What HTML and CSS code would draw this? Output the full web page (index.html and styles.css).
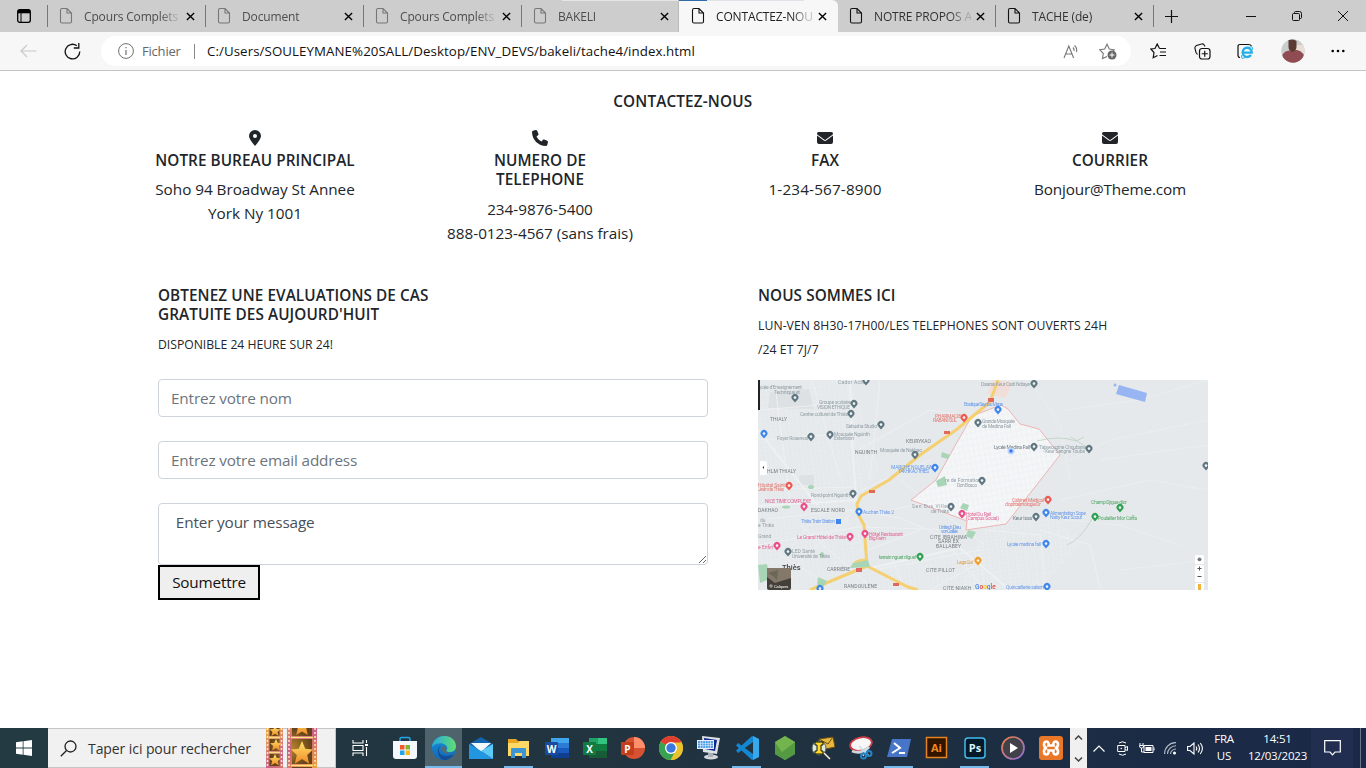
FILE: index.html
```html
<!DOCTYPE html>
<html lang="fr">
<head>
<meta charset="utf-8">
<title>CONTACTEZ-NOUS</title>
<link rel="stylesheet" href="styles.css">
</head>
<body>
<svg width="0" height="0" class="defs">
  <defs>
    <symbol id="doc" viewBox="0 0 14 18"><path d="M1.5 3.2Q1.5 1.5 3 1.5H8L12.5 6V14.5Q12.5 16 11 16H3Q1.5 16 1.5 14.5ZM8 1.7V6H12.3" fill="none" stroke="currentColor" stroke-width="1.1"/></symbol>
    <symbol id="x" viewBox="0 0 10 10"><path d="M1 1L9 9M9 1L1 9" stroke="currentColor" stroke-width="1.5"/></symbol>
    <symbol id="mail" viewBox="0 0 16 12"><path d="M1.5 0H14.500Q16 0 16 1.500 16 2.300 15.400 2.700L8.600 7.800Q8 8.200 7.400 7.800L.6 2.700Q0 2.300 0 1.500 0 0 1.500 0ZM0 3.500L6.800 8.600Q8 9.400 9.200 8.600L16 3.500V10Q16 12 14 12H2Q0 12 0 10Z" fill="currentColor"/></symbol>
    <linearGradient id="edgeA" x1="0" y1="0" x2="1" y2="0"><stop offset="0" stop-color="#25a8e0"/><stop offset="1" stop-color="#62dc72"/></linearGradient>
    <linearGradient id="edgeB" x1="0" y1="0" x2="0" y2="1"><stop offset="0" stop-color="#1b91d8"/><stop offset="1" stop-color="#1167b8"/></linearGradient>
    <linearGradient id="gold" x1="0" y1="0" x2="0" y2="1"><stop offset="0" stop-color="#ffe36a"/><stop offset="1" stop-color="#ef8a28"/></linearGradient>
    <linearGradient id="film" x1="0" y1="0" x2="1" y2="1"><stop offset="0" stop-color="#efb04c"/><stop offset=".5" stop-color="#c9608a"/><stop offset="1" stop-color="#f0a038"/></linearGradient>
    <radialGradient id="frame"><stop offset="0" stop-color="#b8862c"/><stop offset="1" stop-color="#65421b"/></radialGradient>
    <linearGradient id="ring" x1="0" y1="0" x2="1" y2="1"><stop offset="0" stop-color="#f08040"/><stop offset="1" stop-color="#8a70e0"/></linearGradient>
    <pattern id="streets" width="9" height="8" patternUnits="userSpaceOnUse" patternTransform="rotate(-8)"><path d="M0 1H9M2 0V8M0 5.500H5M6.500 1V8" fill="none" stroke="#eff2f4" stroke-width=".6"/></pattern>
    <pattern id="quarter" width="5" height="6" patternUnits="userSpaceOnUse" patternTransform="rotate(-10)"><path d="M0 1H5M1 0V6" fill="none" stroke="#e9edef" stroke-width=".6"/></pattern>
    <g id="pin"><path d="M0 3.600L-2.200 1A3.400 3.400 0 1 1 2.200 1Z"/><circle cy="-1.400" r="1.300" fill="#f2f5f7"/></g>
    <path id="star" d="M0-10L3-3.500 10-3 4.700 1.700 6.500 9 0 5-6.500 9-4.700 1.700-10-3-3-3.500Z"/>
  </defs>
</svg>

<header class="tabs">
  <div class="tab-menu"><svg width="14" height="14" viewBox="0 0 14 14"><rect x=".7" y=".7" width="12.600" height="12.600" rx="2" fill="none" stroke="#000" stroke-width="1.300"/><path d="M1 1H13V4.300H1Z"/><path d="M4 4V13" stroke="#000"/></svg></div>
  <div class="tab dim"><svg class="doc"><use href="#doc"/></svg><span class="tab-name">Cpours Complets</span><svg class="close"><use href="#x"/></svg></div>
  <div class="tab dim"><svg class="doc"><use href="#doc"/></svg><span class="tab-name">Document</span><svg class="close"><use href="#x"/></svg></div>
  <div class="tab dim"><svg class="doc"><use href="#doc"/></svg><span class="tab-name">Cpours Complets</span><svg class="close"><use href="#x"/></svg></div>
  <div class="tab dim loading"><svg class="doc"><use href="#doc"/></svg><span class="tab-name">BAKELI</span><svg class="close"><use href="#x"/></svg></div>
  <div class="tab active"><svg class="doc"><use href="#doc"/></svg><span class="tab-name">CONTACTEZ-NOU</span><svg class="close"><use href="#x"/></svg></div>
  <div class="tab after"><svg class="doc"><use href="#doc"/></svg><span class="tab-name">NOTRE PROPOS A</span><svg class="close"><use href="#x"/></svg></div>
  <div class="tab"><svg class="doc"><use href="#doc"/></svg><span class="tab-name">TACHE (de)</span><svg class="close"><use href="#x"/></svg></div>
  <div class="new-tab"><svg width="15" height="15" viewBox="0 0 15 15"><path d="M7.500 1V14M1 7.500H14" stroke="#111" stroke-width="1.200"/></svg></div>
  <div class="win-buttons">
    <svg width="10" height="10"><path d="M0 5.500H10" stroke="#111"/></svg>
    <svg width="10" height="10" viewBox="0 0 10 10"><path d="M2.500 2V1.500Q2.500.5 3.500.5H7.500Q9.500.5 9.500 2.500V6.500Q9.500 7.500 8.500 7.500H8" fill="none" stroke="#111"/><rect x=".5" y="2.500" width="7" height="7" rx="1" fill="none" stroke="#111"/></svg>
    <svg width="10" height="10"><path d="M0 0L10 10M10 0L0 10" stroke="#111"/></svg>
  </div>
</header>

<nav class="toolbar">
  <svg class="back" width="17" height="14" viewBox="0 0 17 14"><path d="M16.500 7H1M7 1L1 7L7 13" fill="none" stroke="#c9c9c9" stroke-width="1.200"/></svg>
  <svg class="reload" width="17" height="17" viewBox="0 0 17 17"><path d="M15.800 8.500A7.300 7.300 0 1 1 12.800 2.700M14.800 0V5H9.800" fill="none" stroke="#111" stroke-width="1.300"/></svg>
  <div class="address">
    <svg width="16" height="16" viewBox="0 0 16 16"><circle cx="8" cy="8" r="7.400" fill="none" stroke="#707070"/><path d="M8 7V12M8 4V5.300" stroke="#707070" stroke-width="1.200"/></svg>
    <span class="scheme">Fichier</span>
    <span class="url">C:/Users/SOULEYMANE%20SALL/Desktop/ENV_DEVS/bakeli/tache4/index.html</span>
    <svg class="read" width="17" height="15" viewBox="0 0 17 15"><path d="M1 14L5.800 2L10.600 14M2.700 10H9M10 3.500Q11.500 5 11 7M11.500 1.500Q14.500 4 13.500 8" fill="none" stroke="#777" stroke-width="1.100"/></svg>
    <svg width="18" height="17" viewBox="0 0 18 17"><path d="M8 13.500L3.500 15.500 4.300 10.500 .8 6.800 5.700 6 8 1.200 10.300 6 15.200 6.800 14 8" fill="none" stroke="#777" stroke-width="1.100"/><circle cx="13" cy="12" r="4.500" fill="#666"/><path d="M13 9.500V14.500M10.500 12H15.500" stroke="#fff"/></svg>
  </div>
  <div class="tools">
    <svg width="17" height="16" viewBox="0 0 17 16"><path d="M9.500 5.500L7.200 1 5 5.500.8 6 4 9.500 3.200 14.700 7.500 12.500M9.500 5.500H16M10 9H16M9.500 12.500H16" fill="none" stroke="#111" stroke-width="1.200"/></svg>
    <svg width="17" height="17" viewBox="0 0 17 17"><path d="M3.500 11.500L2 9.500 1 5.500Q.5 3.500 2.500 2.500L7.500 1Q9.500.3 10.500 2.500L11 3.500" fill="none" stroke="#111" stroke-width="1.100"/><rect x="5.500" y="5.500" width="10.500" height="10.500" rx="2.500" fill="#f7f7f7" stroke="#111" stroke-width="1.200"/><path d="M10.750 7.700V13.800M7.700 10.750H13.800" stroke="#111" stroke-width="1.200"/></svg>
    <svg width="17" height="17" viewBox="0 0 17 17"><path d="M3 14.500Q1 14.500 1 12V3.500Q1 1.500 3 1.500H11.500Q13.500 1.500 14.500 3" fill="none" stroke="#111" stroke-width="1.200"/><path d="M14 12A4.600 4.600 0 1 1 14.800 9.700H6" fill="none" stroke="#25aee8" stroke-width="2.300"/><path d="M5 12Q3 17.500 9 14M11 5Q16.500 2 15.500 6.500" fill="none" stroke="#25aee8"/></svg>
    <svg width="24" height="24" viewBox="0 0 24 24"><clipPath id="face"><circle cx="12" cy="12" r="11.700"/></clipPath><g clip-path="url(#face)"><path fill="#c9cdcb" d="M0 0H24V24H0Z"/><path fill="#e9ded5" d="M13 6H24V14H13Z"/><path fill="#8f4c53" d="M0 24Q0 12 8 11.500L16 11Q24 12 24 24Z"/><path fill="#5a3a33" d="M7.500 1Q12-1 15.500 2V8Q15.500 11 12 13 7.500 12 7.500 8Z"/></g></svg>
    <svg width="14" height="4"><circle cx="1.700" cy="2" r="1.300"/><circle cx="7" cy="2" r="1.300"/><circle cx="12.300" cy="2" r="1.300"/></svg>
  </div>
</nav>

<main class="page">
  <h6 class="title">CONTACTEZ-NOUS</h6>
  <section class="contacts">
    <div class="contact">
      <div class="contact-icon"><svg width="12" height="16" viewBox="0 0 12 16"><path fill="currentColor" fill-rule="evenodd" d="M6 16Q0 9 0 6A6 6 0 0 1 12 6Q12 9 6 16ZM6 4A2 2 0 1 0 6 8 2 2 0 0 0 6 4Z"/></svg></div>
      <h6>NOTRE BUREAU PRINCIPAL</h6>
      <p>Soho 94 Broadway St Annee<br>York Ny 1001</p>
    </div>
    <div class="contact">
      <div class="contact-icon"><svg width="16" height="16" viewBox="0 0 512 512"><path fill="currentColor" d="M164.900 24.600c-7.700-18.600-28-28.500-47.400-23.200l-88 24C12.100 30.200 0 46 0 64c0 247.400 200.600 448 448 448 18 0 33.800-12.100 38.600-29.500l24-88c5.300-19.400-4.600-39.700-23.200-47.400l-96-40c-16.300-6.800-35.200-2.100-46.300 11.600L304.700 368C234.300 334.700 177.300 277.700 144 207.300L193.300 167c13.700-11.200 18.400-30 11.600-46.300z"/></svg></div>
      <h6>NUMERO DE<br>TELEPHONE</h6>
      <p>234-9876-5400<br>888-0123-4567 (sans frais)</p>
    </div>
    <div class="contact">
      <div class="contact-icon"><svg width="16" height="12"><use href="#mail"/></svg></div>
      <h6>FAX</h6>
      <p class="fax">1-234-567-8900</p>
    </div>
    <div class="contact">
      <div class="contact-icon"><svg width="16" height="12"><use href="#mail"/></svg></div>
      <h6>COURRIER</h6>
      <p class="email">Bonjour@Theme.com</p>
    </div>
  </section>

  <section class="lower">
    <form class="form">
      <h6>OBTENEZ UNE EVALUATIONS DE CAS<br>GRATUITE DES AUJOURD'HUIT</h6>
      <p class="small">DISPONIBLE 24 HEURE SUR 24!</p>
      <input class="field" type="text" placeholder="Entrez votre nom">
      <input class="field" type="text" placeholder="Entrez votre email address">
      <textarea class="field area"> Enter your message</textarea>
      <button class="submit" type="button">Soumettre</button>
    </form>
    <div class="place">
      <h6>NOUS SOMMES ICI</h6>
      <p class="small hours">LUN-VEN 8H30-17H00/LES TELEPHONES SONT OUVERTS 24H<br>/24 ET 7J/7</p>
      <svg class="map" viewBox="758 380 450 210">
        <rect x="758" y="380" width="450" height="210" fill="#e5e9eb"/>
        <path d="M758 380H852L880 470 856 500 866 568 985 545V590H758Z" fill="url(#streets)" opacity=".55"/>
        <path d="M985 525L1050 510 1080 545 1040 590H960Z" fill="url(#streets)" opacity=".6"/>
        <path d="M770 392L809 389 814 409 768 408Z" fill="#dde1e4"/><path d="M800 475H814V485H798Z" fill="#dce1e4"/>
        <path d="M993 380L1012 382 1006 398 987 394Z" fill="#f2ded9"/>
        <g fill="none" stroke="#eef1f2" stroke-width=".9">
          <path d="M758 410L860 402M758 440L858 433M758 520L850 510 900 518 940 535 985 590M758 545L858 527 960 530M770 590L850 515M800 525L875 590M780 555L830 585M758 490L852 487M812 380L840 478M775 385L790 500M880 380L870 480M858 450L930 410 990 420M862 490L930 460M900 480L985 545M865 515L940 500M868 550L920 530M875 570L980 550M930 590L985 560M905 590L890 555M985 530L1040 535 1045 590M1040 530L1090 545 1100 588"/>
          <path stroke-width=".6" d="M1060 500L1150 480 1208 490M1060 465L1110 440 1208 420M1065 410L1140 400 1208 380M1030 380L1060 425 1070 480M1045 518L1120 525 1180 545M1100 460L1208 445M1120 570L1208 560"/>
          <path stroke-width="2" d="M850 380L852 440 856 500M758 506L858 500M758 430L817 505M870 568L960 548 1010 590"/>
        </g>
        <path d="M1001 405L1008 409 1020 424 1039 429 1060 455 1006 524 966 530 967 521 911 500 936 480 956 444 972 416Z" fill="#f5f6f8"/>
        <path d="M1001 405L1008 409 1020 424 1039 429 1060 455 1006 524 966 530 967 521 911 500 936 480 956 444 972 416Z" fill="url(#quarter)" stroke="#eca5a5" stroke-width=".8"/>
        <path d="M998 380L990 402 956 430 920 455 889 480 861 496 857 504 858 514 864 525 867 566M867 566L831 581 810 590M867 566L908 587 918 590M853 566Q855 560 866 560" fill="none" stroke="#f5cf70" stroke-width="3"/>
        <path d="M1037 441Q1060 435 1076 441L1084 437M1092 519Q1080 540 1067 545M1071 437L1088 448" fill="none" stroke="#b5cfbb" stroke-width=".7"/>
        <g fill="#a8d5b5"><path d="M936 481L945 476 947 485 938 487ZM942 452L950 455 948 459 941 457ZM963 503L969 505 967 511 960 508ZM968 530L976 532 972 539 966 536ZM853 563L868 560 870 567 850 568ZM818 577L827 581 822 589 817 587ZM758 565L767 564 770 579 760 583Z"/><ellipse cx="786" cy="507" rx="4" ry="1.500"/><ellipse cx="811" cy="487" rx="3" ry="2"/><ellipse cx="822" cy="555" rx="2" ry="3"/></g>
        <path d="M1119 385L1147 393 1145 402 1116 394Z" fill="#96b5f2"/><circle cx="1115" cy="385" r="1.500" fill="#96b5f2"/>
        <g fill="#e0685e"><rect x="944" y="431" width="6" height="3"/><rect x="869" y="490" width="6" height="3"/><rect x="856" y="568" width="6" height="4"/><rect x="893" y="583" width="6" height="3"/><rect x="988" y="398" width="6" height="4"/></g>
        <g class="map-text gray">
          <text x="758" y="389" textLength="44">lycée d'Enseignement</text><text x="774" y="394" textLength="26">Technique et</text><text x="838" y="384" textLength="27">Cador Actu</text>
          <text x="819" y="404" textLength="32">Groupe scolaire</text><text x="817" y="409" textLength="33">VISION ETHIQUE</text><text x="800" y="416" textLength="48">Centre culturel de Thiès</text>
          <text x="846" y="428" textLength="31">Sabusha Studio</text><text x="777" y="440" textLength="31">Foyer Rosenval</text><text x="834" y="436" textLength="36">Mosquée Nguinth</text><text x="834" y="440" textLength="20">Extension</text>
          <text x="880" y="452" textLength="42">Mosquée de Nakhao</text><text x="811" y="497" textLength="39">Rond-point Nguinth</text><text x="945" y="482" textLength="36">re de Formation</text><text x="957" y="487" textLength="20">Don Bosco</text>
          <text x="912" y="508" textLength="35">Sen Bus Ville</text><text x="931" y="513" textLength="18">de Thiès</text><text x="792" y="553" textLength="23">LED Santé</text><text x="792" y="558" textLength="38">Université de Thiès</text>
          <text x="981" y="386" textLength="49">Daaras Keur Cadi Ndiaye</text><text x="982" y="423" textLength="33">Grande Mosquée</text><text x="982" y="428" textLength="29">de Medina Fall</text><text class="ink" x="994" y="449" textLength="36">Lycée Medina Fall</text>
          <text x="1039" y="449" textLength="47">Tajawouzine Choubane</text><text x="1043" y="453" textLength="42">- Keur Sengne Touba</text><text class="ink" x="1013" y="520" textLength="19">Keur Issa</text>
          <text x="760" y="522">du</text><text x="758" y="527">e Thiès</text><text x="758" y="538">Grand</text>
        </g>
        <g class="map-text area-name">
          <text x="770" y="421" textLength="17">THIALY</text><text x="855" y="454" textLength="22">NGUINTH</text><text x="906" y="443" textLength="25">KEURYKAO</text><text x="767" y="473" textLength="29">HLM THIALY</text><text x="758" y="512" textLength="20">DAKHAO</text><text x="811" y="512" textLength="34">ESCALE NORD</text>
          <text x="930" y="539" textLength="37">CITE IBRAHIMA</text><text x="938" y="543" textLength="21">SARR EX</text><text x="936" y="547.500" textLength="25">BALLABEY</text><text x="926" y="571.500" textLength="29">CITE PILLOT</text><text x="943" y="589.500" textLength="28">CITE NIAKH</text><text x="827" y="571" textLength="23">CARRIÈRE</text><text x="844" y="588" textLength="33">RANDOULÈNE</text>
        </g>
        <g class="map-text blue"><text x="964" y="406" textLength="39">Boutique Seydou Mane</text><text x="891" y="469" textLength="42">MARCHE NGUELAW</text><text x="898" y="473" textLength="31">TAKHIKAO THIES</text><text x="863" y="514" textLength="31">Auchan Thiès 2</text><text x="801" y="523" textLength="34">Thiès Train Station</text><text x="939" y="529" textLength="22">Unitech Dieu</text><text x="941" y="533" textLength="17">von Galilée</text><text x="1050" y="515" textLength="36">Alimentation Sope</text><text x="1050" y="519" textLength="32">Naby Keur Scout</text><text x="1007" y="546" textLength="34">Lycée medina fall</text><text x="1006" y="589" textLength="38">Quincaillerie salam</text></g>
        <g class="map-text red"><text x="935" y="418" textLength="26">PHARMACIE</text><text x="933" y="422" textLength="24">RABANI SUL</text><text x="758" y="487" textLength="27">Hôpital Saint</text><text x="758" y="491" textLength="26">Jean de Thiès</text><text x="1012" y="502" textLength="32">Cabinet Médical</text><text x="1005" y="506" textLength="36">d'ophtalmologie Dr</text></g>
        <g class="map-text pink"><text x="765" y="503" textLength="46">NICE TIME COMPLEXE</text><text x="797" y="539" textLength="49">Le Grand Hôtel de Thiès</text><text x="869" y="536" textLength="34">Hôtel Restaurant</text><text x="869" y="540" textLength="17">Big Faim</text><text x="758" y="549">e Enfin</text><text x="966" y="516" textLength="25">Hotel Du Rail</text><text x="966" y="520" textLength="33">(Campus Social)</text></g>
        <g class="map-text green"><text x="879" y="559" textLength="37">terrain nguet diguel</text><text x="1091" y="504" textLength="36">Champ Djigue dior</text><text x="1098" y="520" textLength="39">Poulailler Mor Caffa</text></g>
        <text class="map-text orange" x="957" y="564" textLength="16">Legs Gui</text>
        <text class="thies" x="782" y="570">Thiès</text>
        <g fill="#607782"><use href="#pin" x="795" y="399"/><use href="#pin" x="866" y="382"/><use href="#pin" x="854" y="405"/><use href="#pin" x="851" y="415"/><use href="#pin" x="881" y="426"/><use href="#pin" x="811" y="438"/><use href="#pin" x="830" y="436"/><use href="#pin" x="915" y="456"/><use href="#pin" x="853" y="495"/><use href="#pin" x="951" y="508"/><use href="#pin" x="788" y="553"/><use href="#pin" x="978" y="424"/><use href="#pin" x="982" y="482"/><use href="#pin" x="1034" y="385"/><use href="#pin" x="1034" y="448"/><use href="#pin" x="1089" y="450"/><use href="#pin" x="1036" y="518"/><use href="#pin" x="1206" y="467"/></g>
        <g fill="#3f86ec"><use href="#pin" x="764" y="435"/><use href="#pin" x="935" y="469"/><use href="#pin" x="859" y="513"/><use href="#pin" x="998" y="411"/><use href="#pin" x="1046" y="514"/><use href="#pin" x="1046" y="545"/><use href="#pin" x="1047" y="588"/><use href="#pin" x="820" y="590"/><rect x="836" y="519" width="5" height="5"/></g>
        <g fill="#ec5951"><use href="#pin" x="964" y="419"/><use href="#pin" x="789" y="487"/><use href="#pin" x="1048" y="501"/></g>
        <g fill="#eb4d88"><use href="#pin" x="804" y="508"/><use href="#pin" x="850" y="538"/><use href="#pin" x="865" y="535"/><use href="#pin" x="777" y="547"/><use href="#pin" x="962" y="515"/></g>
        <g fill="#2da151"><use href="#pin" x="920" y="558"/><use href="#pin" x="1095" y="518"/><use href="#pin" x="1120" y="509"/></g>
        <use href="#pin" x="978" y="562" fill="#f39c25"/>
        <circle cx="1011" cy="451" r="3.500" fill="#bdd2fc"/><circle cx="1011" cy="451" r="1.700" fill="#3478ef"/>
        <text class="google" x="975" y="589"><tspan fill="#4285f4">G</tspan><tspan fill="#ea4335">o</tspan><tspan fill="#fbbc05">o</tspan><tspan fill="#4285f4">g</tspan><tspan fill="#34a853">l</tspan><tspan fill="#ea4335">e</tspan></text>
        <path d="M758 380H760V410H758Z" fill="#222"/><path d="M760 461H765Q767 461 767 463V473Q767 475 765 475H760Z" fill="#fff"/><path d="M764 466V469L762.500 467.500Z" fill="#333"/>
        <rect x="767" y="568" width="24" height="22" rx="2" fill="#444039"/><path d="M767 568H791V578L775 583 767 577Z" fill="#83786a"/><path d="M768 573L778 570 777 580 773 576Z" fill="#6a6756"/><text x="774" y="588" class="map-text white">Calques</text><circle cx="771" cy="586" r="1.200" fill="none" stroke="#fff" stroke-width=".6"/>
        <g fill="#fff"><rect x="1195" y="555" width="9" height="9" rx="1.500"/><rect x="1195" y="565" width="9" height="17" rx="1.500"/><rect x="1195" y="583" width="9" height="7" rx="1.500"/></g><circle cx="1199.500" cy="559.300" r="1.900" fill="#777"/><path d="M1199.500 566.500V570.500M1197.500 568.500H1201.500M1197.500 576.500H1201.500" stroke="#555"/><path d="M1198 584H1201V590H1198Z" fill="#efb43a"/>
      </svg>
    </div>
  </section>
</main>

<footer class="taskbar">
  <div class="start"><svg width="16" height="16" viewBox="0 0 16 16" fill="#fff"><path d="M0 2.300L6.700 1.300V7.600H0ZM7.500 1.200L16 0V7.600H7.500ZM0 8.400H6.700V14.700L0 13.700ZM7.500 8.400H16V16L7.500 14.800Z"/></svg></div>
  <div class="search">
    <svg width="17" height="17" viewBox="0 0 17 17"><circle cx="10.500" cy="6.500" r="5.500" fill="none" stroke="#222" stroke-width="1.300"/><path d="M6.500 10.500L.8 16.200" stroke="#222" stroke-width="1.300"/></svg>
    <span>Taper ici pour rechercher</span>
    <svg class="films" width="52" height="40" viewBox="0 0 52 40">
      <path fill="url(#film)" d="M0 0H17V40H0ZM21 0H51V40H21Z"/>
      <path stroke="#ffe9c0" stroke-width="1.500" stroke-dasharray="2 2" d="M1.500 0V40M15.500 0V40M23 0V40M49 0V40"/>
      <path fill="url(#frame)" d="M3.500 0H13.500V8H3.500ZM3.500 11H13.500V23H3.500ZM3.500 26H13.500V38H3.500ZM26 0H46V8H26ZM26 11H46V36H26ZM26 39H46V40H26Z"/>
      <path d="M3 9.500H14M3 24.500H14M25 9.500H47M25 37.500H47" stroke="#ffdf7a" stroke-width="1.500"/>
      <g fill="url(#gold)"><use href="#star" transform="translate(9 3) scale(.55)"/><use href="#star" transform="translate(10 17) scale(.6)"/><use href="#star" transform="translate(9 32) scale(.6)"/><use href="#star" transform="translate(36 25) scale(1.100 1.200)"/><use href="#star" transform="translate(36 -1) scale(.9)"/></g>
    </svg>
  </div>
  <div class="taskview"><svg width="17" height="16" viewBox="0 0 17 16"><path d="M1 0V3H11V0M1 16V13H11V16M1 5.500H11V10.500H1ZM14.500 0V3M14.500 7V16" fill="none" stroke="#fff" stroke-width="1.100"/><rect x="13" y="4" width="3" height="2" fill="#fff"/></svg></div>
  <div class="apps">
    <div class="app"><svg viewBox="0 0 24 24"><path d="M7 7V3Q7 1.500 8.500 1.500H15.500Q17 1.500 17 3V7" fill="none" stroke="#24a7e8" stroke-width="1.500"/><path d="M0 5H24V20Q24 23 21 23H3Q0 23 0 20Z" fill="#f4f7fb"/><path fill="#f15a2c" d="M7 9H11.500V13.500H7Z"/><path fill="#7fba2c" d="M12.500 9H17V13.500H12.500Z"/><path fill="#20a5e8" d="M7 14.500H11.500V19H7Z"/><path fill="#fdb813" d="M12.500 14.500H17V19H12.500Z"/></svg></div>
    <div class="app on current"><svg viewBox="0 0 24 24"><circle cx="12" cy="12" r="12" fill="url(#edgeB)"/><path d="M0 11C1-3 23-4 24 10C24 17 16 17 14 15C19 10 8 3 0 11Z" fill="url(#edgeA)"/><path d="M9 9C3 16 10 24 22 18C19 23 15 24 12 24C5 22 4 12 9 9Z" fill="#124f98"/><path d="M10 11Q8 19 22 18Q17 19 14 15 15 12 12 10Z" fill="#596a72"/></svg></div>
    <div class="app"><svg viewBox="0 0 24 24"><path fill="#1264ad" d="M0 8L12 1 24 8V14H0Z"/><path fill="#f3f8fc" d="M2 7H22L12 16Z"/><path fill="#2296e0" d="M0 8V23H24L12 15Z"/><path fill="#5cc9f7" d="M24 8V23L12 15Z"/></svg></div>
    <div class="app on"><svg viewBox="0 0 24 24"><path fill="#e8a622" d="M1 3H9L11 5H22V9H1Z"/><path fill="#ffd866" d="M1 7H11L13 5H22V20H1Z"/><path fill="#3e95d6" d="M4 13Q4 12 5 12H18Q19 12 19 13V22H15V17H8V22H4Z"/></svg></div>
    <div class="app"><svg viewBox="0 0 24 24"><path fill="#41a5ee" d="M6 2H24V7H6Z"/><path fill="#2b7cd3" d="M6 7H24V12H6Z"/><path fill="#185abd" d="M6 12H24V17H6Z"/><path fill="#103f91" d="M6 17H24V22H6Z"/><rect y="6" width="13" height="13" rx="1" fill="#174ca3"/><text class="logo" x="6.500" y="16.500">W</text></svg></div>
    <div class="app"><svg viewBox="0 0 24 24"><path fill="#21a366" d="M6 2H24V8H6Z"/><path fill="#107c41" d="M6 8H24V15H6Z"/><path fill="#185c37" d="M6 15H24V22H6Z"/><path fill="#33c481" d="M15 2H24V8H15Z"/><rect y="6" width="13" height="13" rx="1" fill="#107c41"/><text class="logo" x="6.500" y="16.500">X</text></svg></div>
    <div class="app"><svg viewBox="0 0 24 24"><circle cx="13" cy="12" r="11" fill="#d75232"/><path fill="#ff8f6b" d="M13 1A11 11 0 0 1 24 12H13Z"/><rect y="6" width="13" height="13" rx="1" fill="#c43e1c"/><text class="logo" x="6.500" y="16.500">P</text></svg></div>
    <div class="app"><svg viewBox="0 0 24 24"><circle cx="12" cy="12" r="12" fill="#eac22d"/><path fill="#df3e30" d="M12 12L1.600 6A12 12 0 0 1 22.400 6Z"/><path fill="#37a350" d="M12 12L1.600 6A12 12 0 0 0 12 24L17 14Z"/><path fill="#eac22d" d="M12 6.500H22.600A12 12 0 0 1 11.500 24L17 14Z"/><circle cx="12" cy="12" r="6" fill="#fff"/><circle cx="12" cy="12" r="4.700" fill="#3c78df"/></svg></div>
    <div class="app"><svg viewBox="0 0 24 24"><path fill="#dce1e5" d="M5 0L23 2 20 18 6 16Z"/><path fill="#13258e" d="M7 2L20 4 18 15 8 13Z"/><path fill="#e8f1fa" d="M0 4H17V13H0Z"/><path d="M1 6H16M1 8.500H16M1 11H16" stroke="#4f9fe8" stroke-width="1.800" stroke-dasharray="2 .6"/><ellipse cx="14" cy="21" rx="7" ry="2.500" fill="#d3d8dc"/><path d="M11 17H16V21H11Z" fill="#aab1b6"/></svg></div>
    <div class="app on"><svg viewBox="0 0 24 24"><path fill="#1487d0" d="M17 0L24 3V21L17 24 1 9.500 3 7 18 18V6L3 17 1 14.500Z"/><path fill="#35a9ed" d="M18 0L24 3V21L18 24Z"/></svg></div>
    <div class="app"><svg viewBox="0 0 24 24"><path fill="#6bad4a" d="M12 0L22 6V18L12 24 2 18V6Z"/><path fill="#549a42" d="M2 6L9 16 22 6V18L12 24 2 18Z"/><path fill="#78b953" d="M2 6L12 0 22 6 9 16Z" opacity=".6"/></svg></div>
    <div class="app"><svg viewBox="0 0 24 24"><path fill="#e7b83d" stroke="#6b4c12" d="M8 3L22 1 24 11 10 14Z"/><path d="M8 3L17 8 22 1" fill="none" stroke="#6b4c12"/><circle cx="8" cy="12" r="7" fill="#dfe8dc" stroke="#4e6554"/><path d="M4 6H12V9H10V15H12V18H4V15H6V9H4Z" fill="#ffda25" stroke="#111"/><path d="M13 17L19 23" stroke="#333" stroke-width="3.500"/><path d="M13 17L19 23" stroke="#eee" stroke-width="1.500"/></svg></div>
    <div class="app"><svg viewBox="0 0 24 24"><ellipse cx="12" cy="8" rx="11" ry="6.500" transform="rotate(-12 12 8)" fill="#f7f7f8" stroke="#ce3d45" stroke-width="1.800"/><path d="M3 15Q12 19 20 11" stroke="#d1d5d9" stroke-width="3" fill="none"/><path d="M10 10L20 20M19 11L14 20" stroke="#c9e0ee" stroke-width="1.500"/><g fill="none" stroke="#2685c4" stroke-width="2"><circle cx="14.500" cy="20" r="2.500"/><circle cx="20" cy="17.500" r="2.500"/></g></svg></div>
    <div class="app on"><svg viewBox="0 0 24 24"><path fill="#4776c9" d="M5 3H24L20 21H0Z"/><path d="M7 7L13 12 5 17M12 17H18" fill="none" stroke="#fff" stroke-width="2"/></svg></div>
    <div class="app"><svg viewBox="0 0 24 24"><rect x="1.500" y="1.500" width="20" height="20" fill="#301400" stroke="#e68220" stroke-width="1.500"/><text class="logo ai" x="11.500" y="15.500">Ai</text></svg></div>
    <div class="app on"><svg viewBox="0 0 24 24"><rect x="2" y="2" width="20" height="20" rx="3" fill="#06192b" stroke="#40bdec" stroke-width="1.500"/><text class="logo ps" x="12" y="16">Ps</text></svg></div>
    <div class="app"><svg viewBox="0 0 24 24"><circle cx="12" cy="12" r="11" fill="#424048" stroke="url(#ring)" stroke-width="1.700"/><path fill="#fff" d="M9 7L17 12 9 17Z"/></svg></div>
    <div class="app"><svg viewBox="0 0 24 24"><rect width="24" height="24" rx="3" fill="#e87728"/><path d="M12 9.500H9.500Q10 5.500 7.500 5.500 5 5.500 5 8.500 5 11.500 8 12 5 12.500 5 15.500 5 18.500 7.500 18.500 10 18.500 9.500 14.500H14.500Q14 18.500 16.500 18.500 19 18.500 19 15.500 19 12.500 16 12 19 11.500 19 8.500 19 5.500 16.500 5.500 14 5.500 14.500 9.500Z" fill="none" stroke="#fff" stroke-width="2.600"/></svg></div>
  </div>
  <div class="scroll"><svg width="9" height="5"><path d="M1 4.500L4.500 1 8 4.500" fill="none" stroke="#444" stroke-width="1.500"/></svg><svg width="9" height="5"><path d="M1 .5L4.500 4 8 .5" fill="none" stroke="#444" stroke-width="1.500"/></svg></div>
  <div class="tray">
    <svg width="12" height="7"><path d="M.5 6.500L6 1 11.500 6.500" fill="none" stroke="#fff" stroke-width="1.200"/></svg>
    <svg width="12" height="15" viewBox="0 0 12 15"><path d="M2 2Q5.500-.5 9 2M2 13Q5.500 15.500 9 13M.7 4.500H8V10.500H.7ZM8 6.500L10.500 5.500V9.500L8 8.500" fill="none" stroke="#fff"/><circle cx="4.300" cy="7.500" r=".8" fill="#fff"/></svg>
    <svg width="16" height="12" viewBox="0 0 16 12"><path d="M1 1V3M4 1V3M.5 3.500H4.500V5Q4.500 6 2.500 6 .5 6 .5 4ZM2.500 6V10H5M5 3.500H14V10.500H5ZM15 5.500V8.500" fill="none" stroke="#fff"/><path d="M6.500 5H12.500V9H6.500Z" fill="#fff"/></svg>
    <svg width="13" height="13" viewBox="0 0 13 13"><path d="M.6 12A11 11 0 0 1 12 .6M3.500 12A8.500 8.500 0 0 1 12 3.800M6.500 12A5.500 5.500 0 0 1 12 7" fill="none" stroke="#b7c0cc" stroke-width="1.100"/><circle cx="10.500" cy="11" r="1.500" fill="#fff"/></svg>
    <svg width="17" height="13" viewBox="0 0 17 13"><path d="M.6 4.500H3L7 1V12L3 8.500H.6ZM9 4.500Q10.500 6.500 9 8.500M11 2.500Q14 6.500 11 10.500M13.300 1Q17.500 6.500 13.300 12" fill="none" stroke="#fff" stroke-width="1.100"/></svg>
  </div>
  <div class="stack lang"><span>FRA</span><span>US</span></div>
  <div class="stack clock"><span>14:51</span><span>12/03/2023</span></div>
  <div class="notice"><svg width="17" height="16" viewBox="0 0 17 16"><path d="M.7.700H16.300V12H11L8.500 14.800 6 12H.7Z" fill="none" stroke="#fff" stroke-width="1.200"/></svg></div>
  <div class="desktop"></div>
</footer>
</body>
</html>
```
FILE: styles.css
```css
* { box-sizing: border-box; }
body { margin: 0; height: 768px; overflow: hidden; display: flex; flex-direction: column; background: #fff; color: #212529; font-family: "Open Sans", "Noto Sans", sans-serif; font-size: 15.300px; }
svg { display: block; flex: none; }
.defs { position: absolute; }
h6, p { margin: 0; }

.tabs { height: 32px; display: flex; background: #cdcdcd; font-size: 12px; letter-spacing: -.15px; }
.tab-menu { width: 48px; display: flex; align-items: center; justify-content: center; border-right: 1px solid #777; border-image: linear-gradient(transparent 6px, #777 6px, #777 26px, transparent 26px) 1; }
.tab { width: 158px; display: flex; align-items: center; padding: 0 10px 0 11px; color: #333; border-right: 1px solid; border-image: linear-gradient(transparent 6px, #777 6px, #777 26px, transparent 26px) 1; }
.tab.dim { color: #4d4d4d; }
.tab.dim .doc { color: #777; }
.tab .doc { width: 14px; height: 18px; color: #111; }
.tab .close { width: 9px; height: 9px; color: #000; }
.tab-name { flex: none; width: 97px; margin: 0 5px 0 11px; overflow: hidden; white-space: nowrap; -webkit-mask-image: linear-gradient(90deg, #000 76px, rgba(0, 0, 0, .25) 92px); }
.tab.loading { width: 157px; background: linear-gradient(#e5e5e5, #e5e5e5) 40px 0 / 118px 1px no-repeat; border-image: none; border-color: #bbb; }
.tab.active { width: 159px; padding-left: 12px; background: linear-gradient(90deg, #2e6ba7 28px, #dfe3e7 28px, #dfe3e7 125px, transparent 125px) 0 0 / 100% 1px no-repeat, #f7f7f7; border: 0; border-radius: 0 6px 0 0; color: #222; }
.new-tab { display: flex; align-items: center; padding-left: 10px; }
.win-buttons { margin-left: auto; display: flex; align-items: center; gap: 36px; padding-right: 18px; }

.toolbar { height: 39px; display: flex; align-items: center; background: #f7f7f7; border-bottom: 1px solid #c4c4c4; padding-left: 20px; }
.reload { margin-left: 27px; }
.address { width: 1030px; height: 30px; margin-left: 20px; padding: 0 14px 0 17px; border-radius: 15px; background: #fff; display: flex; align-items: center; font-size: 13px; color: #111; letter-spacing: -.2px; }
.scheme { margin-left: 8px; width: 53px; height: 15px; line-height: 15px; border-right: 1px solid #888; color: #666; }
.url { margin-left: 12px; white-space: nowrap; font-size: 13.300px; letter-spacing: .070px; }
.read { margin-left: auto; margin-right: 19px; }
.tools { flex: 1; display: flex; align-items: center; justify-content: space-between; padding: 0 21px 0 19px; }

.page { flex: 1; padding: 21px 113px 0 112.500px; }
h6 { font-size: 15.300px; line-height: 19.200px; font-weight: 600; letter-spacing: .060px; }
.title { text-align: center; letter-spacing: .15px; }
.contacts { display: grid; grid-template-columns: repeat(4, 285px); margin-top: 15px; height: 160px; text-align: center; }
.contact-icon { height: 24px; display: flex; align-items: center; justify-content: center; }
.contact h6 { padding-top: 1px; margin-bottom: -1px; }
.contact p { margin-top: 8px; line-height: 24px; letter-spacing: -.030px; }
.contact .fax { letter-spacing: .150px; }
.contact .email { letter-spacing: -.150px; }
.lower { display: flex; gap: 50px; padding-left: 45.500px; }
.form { width: 550px; display: flex; flex-direction: column; align-items: flex-start; }
.small { font-size: 12.200px; line-height: 24px; margin-top: 8px; letter-spacing: -.010px; }
.field { width: 550px; height: 38px; margin: 0 0 24px; padding: 6px 12px; border: 1px solid #ced4da; border-radius: 4px; font: inherit; line-height: 24px; letter-spacing: -.150px; color: #495057; background: #fff; }
.lower h6 { letter-spacing: .080px; }
.field::placeholder { color: #6c757d; opacity: 1; }
.small + .field { margin-top: 22.500px; }
.area { height: 62px; margin: 0; overflow: hidden; resize: vertical; text-indent: 1px; }
.submit { width: 102px; height: 35px; border: 2px solid #000; background: #efefef; font: inherit; letter-spacing: -.200px; color: #111; padding: 0 0 2px; }
.place { width: 450px; }
.place .small { white-space: nowrap; letter-spacing: .070px; margin-top: 9px; }
.map { width: 450px; height: 210px; margin-top: 18px; filter: blur(.3px); }
.map-text { font-family: Roboto, sans-serif; font-size: 5px; }
.gray { fill: #929fa6; }
.ink { fill: #707b82; }
.area-name { fill: #747c81; font-size: 5px; }
.blue { fill: #6b9bea; }
.red { fill: #e6776f; }
.pink { fill: #e26893; }
.green { fill: #55a768; }
.orange { fill: #e0a050; }
.white { fill: #fff; font-size: 4px; }
.thies { font: 500 7.500px Roboto, sans-serif; fill: #444; }
.google { font: 500 6.500px Roboto, sans-serif; }

.taskbar { height: 40px; display: flex; background: linear-gradient(90deg, #233a43, #20323f 55%, #1b2b45 85%, #1b2948); color: #fff; }
.start { width: 48px; display: flex; align-items: center; justify-content: center; }
.search { width: 288px; display: flex; align-items: center; background: #f1f1f1; border: 1px solid #c5c5c5; border-width: 1px 1px 1px 0; padding-left: 12px; color: #333; font-size: 14px; letter-spacing: -.080px; }
.search span { margin-left: 11px; width: 178px; white-space: nowrap; }
.taskview { width: 49px; display: flex; align-items: center; justify-content: center; }
.apps { display: grid; grid-template-columns: repeat(18, 38px); width: 684px; }
.app { display: flex; align-items: center; justify-content: center; padding-left: 1px; }
.app svg { width: 24px; height: 24px; }
.app.on { background: linear-gradient(#76b9ed, #76b9ed) center bottom / 29px 2px no-repeat; }
.app.current { background: linear-gradient(#76b9ed, #76b9ed) center bottom / 100% 2px no-repeat, #4e636b; margin-left: 2px; margin-right: -1px; padding-left: 0; }
.logo { font: bold 10px "Open Sans", sans-serif; fill: #fff; text-anchor: middle; }
.ai { fill: #f28a20; font-size: 11px; }
.ps { fill: #d9f3ff; font-size: 11px; }
.scroll { margin-left: 1px; width: 17px; background: #f0f0f0; display: flex; flex-direction: column; align-items: center; justify-content: space-between; padding: 7px 0 6px; }
.tray { width: 117px; display: flex; align-items: center; justify-content: space-between; padding-left: 6px; }
.tray svg:nth-child(2) { margin-left: 2px; }
.stack { display: flex; flex-direction: column; align-items: center; font-size: 11.500px; line-height: 17px; padding-top: 2px; letter-spacing: -.2px; }
.lang { width: 42px; margin-left: -1px; }
.clock { width: 67px; margin-left: -1px; }
.notice { width: 42px; display: flex; align-items: center; justify-content: center; background: #222e50; }
.desktop { width: 8px; border-right: 1px solid #6b7486; }
```
